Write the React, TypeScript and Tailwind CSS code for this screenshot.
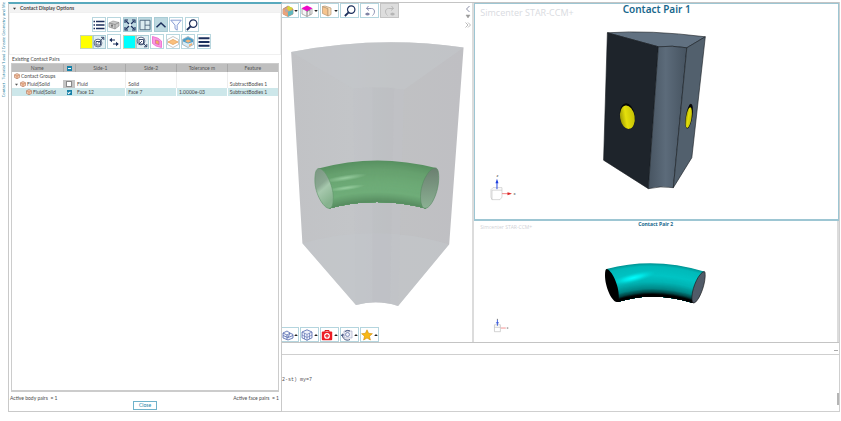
import type { ReactNode } from "react";

type ToolProps = {
  label: string;
  active?: boolean;
  children: ReactNode;
};

type Row = {
  side1: string;
  side2: string;
  tolerance: string;
  feature: string;
};

const childRow: Row = {
  side1: "Face 12",
  side2: "Face 7",
  tolerance: "1.0000e-03",
  feature: "SubtractBodies 1",
};

const Tool = ({ label, active, children }: ToolProps) => (
  <button
    aria-label={label}
    className={`flex h-[15px] w-[14px] shrink-0 items-center justify-center border ${
      active ? "border-[#a9ccd5] bg-[#bdd9e1]" : "border-[#b9d7df] bg-white"
    }`}
  >
    <svg viewBox="0 0 12 12" className="size-3 shrink-0">
      {children}
    </svg>
  </button>
);

const ColorTool = ({ label, swatch, children }: ToolProps & { swatch: string }) => (
  <div className="flex h-[14px] w-[26px]">
    <button aria-label={`${label} color`} className={`w-[13px] border border-[#c5d5b8] ${swatch}`} />
    <button aria-label={label} className="flex w-[13px] items-center justify-center border border-[#a9ccd5] bg-[#e3eff3]">
      <svg viewBox="0 0 12 12" className="size-3 shrink-0">
        {children}
      </svg>
    </button>
  </div>
);

const TreeCube = () => (
  <svg viewBox="0 0 12 12" className="size-[6px] shrink-0">
    <path d="M6 1 11 3.5V9L6 11.5 1 9V3.5Z" fill="#f3c9ae" stroke="#a4664a" />
    <path d="M1 3.5 6 6 11 3.5 M6 6v5.5" fill="none" stroke="#c06c3c" />
  </svg>
);

const Magnifier = () => (
  <g fill="none" stroke="#1c2f5c">
    <circle cx="7.2" cy="4.6" r="3.7" strokeWidth="1.2" />
    <path d="M4.600 7.300 0.900 11" strokeWidth="1.8" />
  </g>
);

type ViewToolProps = {
  label: string;
  arrow?: "up" | "down";
  disabled?: boolean;
  first?: boolean;
  children: ReactNode;
};

const ViewTool = ({ label, arrow, disabled, first, children }: ViewToolProps) => (
  <button
    aria-label={label}
    disabled={disabled}
    className={`flex h-[15px] shrink-0 items-center justify-center border ${first ? "w-[17px] border-l-0" : "w-[19px] gap-px"} ${
      disabled ? "border-[#c4c4c4] bg-[#dddddd]" : "border-[#b4d5de] bg-white"
    }`}
  >
    <svg viewBox="0 0 12 12" className="size-3 shrink-0">
      {children}
    </svg>
    {arrow && (
      <svg viewBox="0 0 4 4" className="size-1 shrink-0">
        <path d={arrow === "up" ? "M0.2 3 2 1 3.8 3Z" : "M0.2 1 2 3 3.8 1Z"} fill="#222" />
      </svg>
    )}
  </button>
);

const Toolbar = () => (
  <div className="flex h-[43px] flex-col items-center border border-[#f0f0f0] pt-1">
    <div className="flex w-[107px] justify-between">
      <Tool label="List">
        <path d="M0.5 2.500h1.500M0.5 6h1.500M0.5 9.500h1.500M3 2.500h8.500M3 6h8.500M3 9.500h8.500" stroke="#1c2f5c" strokeWidth="1.7" />
      </Tool>
      <Tool label="Parts">
        <path d="M1 4 5 2 11 3.5 11 7 7 10 1 8Z" fill="#c9c9c9" stroke="#8b8b8b" strokeWidth="0.6" />
        <path d="M1 4 7 5.5 11 3.5M7 5.5V10M4 4.7V9" fill="none" stroke="#777" strokeWidth="0.6" />
        <circle cx="4" cy="6.7" r="0.9" fill="#666" />
      </Tool>
      <Tool label="Fit view" active>
        <path d="M1 4V1h3M8 1h3v3M11 8v3H8M4 11H1V8" fill="none" stroke="#1c2f5c" strokeWidth="1.1" />
        <path d="M2 2l3 3M10 2 7 5M2 10l3-3M10 10 7 7" stroke="#1c2f5c" strokeWidth="1.2" />
        <path d="M4.5 6h3M6 4.5v3" stroke="#fff" strokeWidth="0.8" />
      </Tool>
      <Tool label="Split layout" active>
        <path d="M1 1.300h10v9.400H1zM6 1.300v9.400M6 6.200h5" fill="#dcebf0" stroke="#425a73" strokeWidth="0.8" />
      </Tool>
      <Tool label="Collapse" active>
        <path d="M1.5 8.200 6 4 10.500 8.200" fill="none" stroke="#1c2f5c" strokeWidth="1.5" />
      </Tool>
      <Tool label="Filter">
        <path d="M0.800 1.200h10.400L7.200 6.200v5L5 9.600V6.200Z" fill="#f6f9ff" stroke="#7e93cf" strokeWidth="0.9" />
      </Tool>
      <Tool label="Search">
        <Magnifier />
      </Tool>
    </div>
    <div className="mt-[2px] flex w-[131px] items-center justify-between">
      <ColorTool label="First side" swatch="bg-[#ffff00]">
        <circle cx="5" cy="7" r="3.9" fill="#fff" stroke="#4a5a7a" strokeWidth="0.9" />
        <path d="M3 5.500h4.500V9H3zM5 7.500 10.500 1.500M8 1.300h2.800V4" fill="none" stroke="#26395f" strokeWidth="0.9" />
      </ColorTool>
      <Tool label="Swap sides">
        <path d="M2 4h5M5 8h5" stroke="#1c2f5c" strokeWidth="1.2" />
        <path d="M4 1.800v4.400L1.200 4ZM8 5.800v4.400L10.800 8Z" fill="#1c2f5c" />
      </Tool>
      <ColorTool label="Second side" swatch="bg-[#00ffff]">
        <circle cx="5" cy="5" r="3.9" fill="#fff" stroke="#4a5a7a" strokeWidth="0.9" />
        <path d="M3 7V3.500h4.500V8H3L6 5M7 7l3.700 3.700M10.800 8v2.800H8" fill="none" stroke="#26395f" strokeWidth="0.9" />
      </ColorTool>
      <Tool label="Highlight faces">
        <path d="M1.500 0.500 7 2.200 10.500 5V11.500L5 10 1.500 7.500Z" fill="#f79adf" stroke="#ee62cf" strokeWidth="0.8" />
        <path d="M4.500 4 8 5v3.600L4.500 7.500Z" fill="#f2ab63" stroke="#d44fb4" strokeWidth="0.6" />
      </Tool>
      <Tool label="Show bodies">
        <path d="M6 0.500 11.500 3.500V8.500L6 11.500 0.500 8.500V3.500Z" fill="#fff" stroke="#b0b0b0" strokeWidth="0.7" />
        <path d="M1 6 6 3.400 11 6 6 8.600Z" fill="#fbc07d" stroke="#e39a4c" strokeWidth="0.7" />
      </Tool>
      <Tool label="Show imprint">
        <path d="M6 0.500 11.500 3.500V8.500L6 11.500 0.500 8.500V3.500Z" fill="#d9ecf5" stroke="#8f9da6" strokeWidth="0.7" />
        <path d="M1 3.500 6 1 11 3.500 11 6 6 7.500 1 5.500Z" fill="#4d9fca" />
        <path d="M3 5 6 3.400 9.500 5 6 6.800ZM7 8.500 10 7v2L7 10.400Z" fill="#f4b477" />
      </Tool>
      <Tool label="Menu">
        <path d="M0.500 2.300h11M0.500 6h11M0.500 9.700h11" stroke="#1c2f5c" strokeWidth="1.9" />
      </Tool>
    </div>
  </div>
);

const PairsTable = () => (
  <table className="w-full table-fixed border-collapse text-[5px] leading-[6px] text-[#4a4a4a]">
    <colgroup>
      <col className="w-[51px]" />
      <col className="w-3" />
      <col />
      <col />
      <col />
      <col />
    </colgroup>
    <thead>
      <tr className="h-2 bg-[#bfbfbf] text-[#555]">
        <th className="border-r border-[#a9a9a9] p-0 font-normal">Name</th>
        <th className="border-r border-[#a9a9a9] p-0">
          <input
            type="checkbox"
            aria-label="Toggle all"
            className="mx-auto flex size-[5px] appearance-none items-center justify-center bg-[#1781a8] after:block after:h-px after:w-[3px] after:bg-white"
          />
        </th>
        <th className="border-r border-[#a9a9a9] p-0 font-normal">Side-1</th>
        <th className="border-r border-[#a9a9a9] p-0 font-normal">Side-2</th>
        <th className="border-r border-[#a9a9a9] p-0 font-normal">Tolerance m</th>
        <th className="p-0 font-normal">Feature</th>
      </tr>
    </thead>
    <tbody>
      <tr className="h-2">
        <td className="p-0">
          <div className="flex items-center gap-px whitespace-nowrap pl-[2px]">
            <TreeCube />
            Contact Groups
          </div>
        </td>
        <td className="p-0" />
        <td className="border-r border-[#eeeeee] p-0" />
        <td className="border-r border-[#eeeeee] p-0" />
        <td className="border-r border-[#eeeeee] p-0" />
        <td className="p-0" />
      </tr>
      <tr className="h-2">
        <td className="p-0">
          <div className="flex items-center gap-px whitespace-nowrap pl-[3px]">
            <svg viewBox="0 0 4 4" className="mr-px size-[3px]">
              <path d="M0 1h4L2 3.500Z" fill="#555" />
            </svg>
            <TreeCube />
            Fluid|Solid
          </div>
        </td>
        <td className="bg-[#c4c4c4] p-0">
          <input
            type="checkbox"
            aria-label="Fluid|Solid group"
            className="mx-auto block size-[6px] appearance-none border border-[#888] bg-white"
          />
        </td>
        <td className="border-r border-[#eeeeee] p-0 pl-[2px]">Fluid</td>
        <td className="border-r border-[#eeeeee] p-0 pl-[2px]">Solid</td>
        <td className="border-r border-[#eeeeee] p-0" />
        <td className="whitespace-nowrap p-0 pl-[2px]">{childRow.feature}</td>
      </tr>
      <tr className="h-2 bg-[#cde7ea]">
        <td className="p-0">
          <div className="flex items-center gap-px whitespace-nowrap pl-[14px]">
            <TreeCube />
            Fluid|Solid
          </div>
        </td>
        <td className="p-0">
          <input
            type="checkbox"
            defaultChecked
            aria-label="Fluid|Solid pair"
            className="mx-auto flex size-[5px] appearance-none items-center justify-center bg-[#1781a8] checked:after:block checked:after:h-[3px] checked:after:w-[2px] checked:after:rotate-45 checked:after:border-b checked:after:border-r checked:after:border-white"
          />
        </td>
        <td className="border-r border-white p-0 pl-[2px]">{childRow.side1}</td>
        <td className="border-r border-white p-0 pl-[2px]">{childRow.side2}</td>
        <td className="border-r border-white p-0 pl-[2px]">{childRow.tolerance}</td>
        <td className="whitespace-nowrap p-0 pl-[2px]">{childRow.feature}</td>
      </tr>
    </tbody>
  </table>
);

const ContactPanel = () => (
  <section className="flex w-[274px] shrink-0 flex-col border border-t-2 border-[#c9c9c9] border-t-[#58a9bd] font-[Lato,sans-serif] text-[#4a4a4a]">
    <h2 className="flex h-2 items-center gap-1 bg-[#f3f3f3] pl-1 text-[5px] font-bold leading-[8px]">
      <svg viewBox="0 0 4 4" className="size-[3px]">
        <path d="M0 1h4L2 3.500Z" fill="#333" />
      </svg>
      Contact Display Options
    </h2>
    <Toolbar />
    <h3 className="pl-[3px] text-[5px] leading-[8px]">Existing Contact Pairs</h3>
    <div className="mx-[2px] flex-1 border border-b-2 border-[#cccccc]">
      <PairsTable />
    </div>
    <footer className="h-[19px] px-px text-[5px] leading-[6px]">
      <div className="flex justify-between pr-px pt-[3px]">
        <span>Active body pairs &nbsp;= 1</span>
        <span>Active face pairs &nbsp;= 1</span>
      </div>
      <button className="mx-auto block h-[9px] w-6 border border-[#6fb2ca] bg-white leading-[7px] text-[#1781a8]">
        Close
      </button>
    </footer>
  </section>
);

// start x, start y, control x, control y, end x, end y
type Curve = [number, number, number, number, number, number];
// position between top and bottom, then r, g, b
type Shade = [number, number, number, number];

const shadeAt = (t: number, shades: Shade[]) => {
  const next = Math.max(1, shades.findIndex((s) => s[0] >= t));
  const a = shades[next - 1];
  const b = shades[next];
  const k = (t - a[0]) / (b[0] - a[0]);
  const mix = (i: 1 | 2 | 3) => Math.round(a[i] + (b[i] - a[i]) * k);
  return `rgb(${mix(1)}, ${mix(2)}, ${mix(3)})`;
};

// Bent pipe surface, shaded by painting bands from the top edge down
const Pipe = ({ top, bottom, shades }: { top: Curve; bottom: Curve; shades: Shade[] }) => (
  <g>
    {Array.from({ length: 40 }, (_, i) => {
      const t = i / 40;
      const [x0, y0, cx, cy, x1, y1] = top.map((v, n) => v + (bottom[n] - v) * t);
      return (
        <path
          key={i}
          d={`M${x0} ${y0}Q${cx} ${cy} ${x1} ${y1}L${bottom[4]} ${bottom[5]}Q${bottom[2]} ${bottom[3]} ${bottom[0]} ${bottom[1]}Z`}
          fill={shadeAt(t, shades)}
        />
      );
    })}
  </g>
);

const TransparentBody = () => (
  <svg viewBox="282 18 190 310" className="min-h-0 w-full flex-1" role="img" aria-label="Transparent body with pipe">
    <defs>
      <linearGradient id="shell" x1="0" x2="1">
        <stop offset="0" stopColor="#c1c2c5" />
        <stop offset="0.35" stopColor="#c3c5c8" />
        <stop offset="0.6" stopColor="#c0c1c3" />
        <stop offset="1" stopColor="#bfbfc3" />
      </linearGradient>
      <linearGradient id="capLeft" x1="0" x2="0.4" y1="0" y2="1">
        <stop offset="0" stopColor="#7b9582" />
        <stop offset="0.45" stopColor="#8aa892" />
        <stop offset="0.6" stopColor="#a6c8ad" />
        <stop offset="1" stopColor="#86b28e" />
      </linearGradient>
      <linearGradient id="capRight" x1="0" x2="0" y1="0" y2="1">
        <stop offset="0" stopColor="#6b7f70" />
        <stop offset="1" stopColor="#8bb193" />
      </linearGradient>
      <radialGradient id="pipeShine">
        <stop offset="0" stopColor="#a9dcb0" stopOpacity="0.7" />
        <stop offset="1" stopColor="#a9dcb0" stopOpacity="0" />
      </radialGradient>
    </defs>
    <path d="M290.700 52Q378 35 463.700 47.500L449.300 245 398 307Q377 300 355.700 306L302 244Z" fill="url(#shell)" />
    <path d="M290.700 52Q378 35 463.700 47.500L404 90Q378 86 353 89Z" fill="#c3c7ca" opacity="0.6" />
    <path d="M302 244Q375 223 449.300 245L398 307Q377 300 355.700 306Z" fill="#c3c7cc" opacity="0.5" />
    <path d="M353 89 355.700 306Q377 300 398 307L404 90Q378 86 353 89Z" fill="#bfc3c8" opacity="0.35" />
    <path d="M372 88 372 303 390 304 394 88Z" fill="#b9babc" opacity="0.2" />
    <Pipe
      top={[318, 169, 376, 153, 436, 168.5]}
      bottom={[329, 209, 376, 196, 426, 209]}
      shades={[
        [0, 88, 145, 97],
        [0.2, 102, 160, 110],
        [0.5, 109, 170, 118],
        [0.75, 111, 173, 121],
        [1, 86, 138, 95],
      ]}
    />
    <ellipse cx="345" cy="178.500" rx="22" ry="3" transform="rotate(-9 345 178.500)" fill="url(#pipeShine)" />
    <ellipse cx="346" cy="188.500" rx="19" ry="2.500" transform="rotate(-8 346 188.500)" fill="url(#pipeShine)" />
    <path d="M318.500 169C325 169 333 186 333 198C333 204 332 209 329 209C323 209 314.500 194 314.500 181C314.500 174 315.500 169 318.500 169Z" fill="url(#capLeft)" stroke="#5f9669" strokeWidth="0.6" />
    <path d="M435.500 168.500C429 168.500 420.500 183 420.500 197C420.500 204 422 209 425 209C431 209 438.800 193 438.800 178C438.800 173 438 168.500 435.500 168.500Z" fill="url(#capRight)" stroke="#578861" strokeWidth="0.6" />
  </svg>
);

const SolidBlock = () => (
  <svg viewBox="475 17 363 202" className="min-h-0 w-full flex-1" role="img" aria-label="Solid block with yellow contact faces">
    <defs>
      <linearGradient id="groove" x1="0" x2="1">
        <stop offset="0" stopColor="#475461" />
        <stop offset="0.45" stopColor="#5c6b7a" />
        <stop offset="1" stopColor="#465360" />
      </linearGradient>
      <linearGradient id="yellowFace" x1="0" x2="1">
        <stop offset="0" stopColor="#9f9c05" />
        <stop offset="0.4" stopColor="#e5e00a" />
        <stop offset="1" stopColor="#c5c106" />
      </linearGradient>
    </defs>
    <g stroke="#161b20" strokeWidth="0.6" strokeLinejoin="round">
      <path d="M607.500 32.500Q650 29.500 705.500 36.500L687 47.500Q672 45 658.500 46.500Z" fill="#617181" />
      <path d="M607.500 32.500 658.500 46.500 648.500 188.500 603.700 160Z" fill="#1e242b" />
      <path d="M658.500 46.500Q672 45 687 47.500L673.500 187.500Q661 185.500 648.500 188.500Z" fill="url(#groove)" />
      <path d="M687 47.500 705.500 36.500 692 157.500 673.500 187.500Z" fill="#52606d" />
    </g>
    <ellipse cx="627.500" cy="116" rx="7.500" ry="13" transform="rotate(-9 627.500 116)" fill="#050607" />
    <ellipse cx="627.500" cy="117" rx="7.300" ry="11.800" transform="rotate(-9 627.500 117)" fill="url(#yellowFace)" />
    <ellipse cx="689.300" cy="116" rx="3.300" ry="12.500" transform="rotate(9 689.300 116)" fill="#050607" />
    <ellipse cx="688.900" cy="117.500" rx="2.800" ry="10.500" transform="rotate(9 688.900 117.500)" fill="url(#yellowFace)" />
    <path d="M491 189.500 493 187.500H502V197L500 199.500H492L491 197ZM492 190H502M492 190V199.500" fill="#fff" stroke="#bdbdbd" strokeWidth="0.6" />
    <path d="M497 189v-7" stroke="#2a49e0" strokeWidth="1" />
    <path d="M495.500 183 497 178.500 498.500 183Z" fill="#1c3ee0" />
    <path d="M502 193.500h7" stroke="#f06a6a" strokeWidth="0.8" />
    <path d="M507.500 192 512 193.500 507.500 195Z" fill="#dc2626" />
    <text x="496.500" y="177" fontSize="4" fill="#333">z</text>
    <text x="513.500" y="195" fontSize="4" fill="#333">x</text>
  </svg>
);

const CyanPipe = () => (
  <svg viewBox="475 231 363 111" className="min-h-0 w-full flex-1" role="img" aria-label="Cyan pipe">
    <defs>
      <radialGradient id="cyanShine">
        <stop offset="0" stopColor="#00ffff" />
        <stop offset="0.4" stopColor="#00f4f4" stopOpacity="0.7" />
        <stop offset="1" stopColor="#00d0d0" stopOpacity="0" />
      </radialGradient>
    </defs>
    <Pipe
      top={[607, 268.5, 655, 255.5, 706, 271]}
      bottom={[618, 302, 655, 290, 695, 303]}
      shades={[
        [0, 0, 150, 150],
        [0.08, 0, 185, 185],
        [0.35, 0, 196, 196],
        [0.55, 0, 180, 180],
        [0.75, 0, 135, 135],
        [0.87, 0, 60, 60],
        [0.92, 0, 0, 0],
        [1, 0, 0, 0],
      ]}
    />
    <ellipse cx="634" cy="277.500" rx="24" ry="5" transform="rotate(-14 634 277.500)" fill="url(#cyanShine)" />
    <path d="M607 268.500C612 269 620 285 619.500 297C619.500 300 619 302 617.500 302C612 301 605.500 286 605.500 275C605.500 271 606 268.500 607 268.500Z" fill="#000" />
    <path d="M706 271C701 272 694 286 693.500 297C693.500 301 694 303 695.500 303C700 302 706.500 287 707 276C707 273 707 271 706 271Z" fill="#515b68" stroke="#111" strokeWidth="0.6" />
    <path d="M493.500 325H499.500V332H493.500ZM493.500 327.500h6" fill="#fff" stroke="#b5b5b5" strokeWidth="0.6" />
    <path d="M496.500 326v-6M495 323h3" stroke="#3354d8" strokeWidth="0.9" />
    <path d="M500 328.300h5" stroke="#e66" strokeWidth="0.7" />
    <path d="M506 328.300h1.500M496.500 319v1" stroke="#444" strokeWidth="0.8" />
  </svg>
);

const MainView = () => (
  <section className="relative flex min-w-0 flex-[191] flex-col border-r-2 border-[#dcdcdc]">
    <div className="flex gap-px">
      <ViewTool label="Scene color" arrow="down" first>
        <path d="M1 4 6 1 11 4V9L6 11.500 1 9Z" fill="#e9a06f" stroke="#9c7e70" strokeWidth="0.7" />
        <path d="M6 1 11 3 8 6 5 4Z" fill="#d6d63a" />
        <path d="M6 6.500 11 5V9L6 11.500Z" fill="#5fb7bf" />
        <path d="M1 4 5 6V11L1 9Z" fill="#eba37b" />
        <path d="M3 3.500 6 5v3L3 6.500Z" fill="#b9a7a0" />
      </ViewTool>
      <ViewTool label="Top face" arrow="down">
        <path d="M1 3.500 6 6V11.500L1 9ZM11 3.500 6 6V11.500L11 9Z" fill="#f5f5f5" stroke="#8f8f8f" strokeWidth="0.7" />
        <path d="M0.500 3.300 6 0.500 11.500 3.300 6 6.300Z" fill="#ed09c9" />
        <path d="M6 6.500 9 5v5" fill="none" stroke="#777" strokeWidth="0.7" />
      </ViewTool>
      <ViewTool label="Section" arrow="down">
        <path d="M1.500 1.500 7 3.500V11L1.500 8.500Z" fill="#f5c48e" stroke="#b59774" strokeWidth="0.7" />
        <path d="M1.500 1.500 4 1 10 3V9.500L7 11V3.500Z" fill="#f9ddb7" stroke="#b59774" strokeWidth="0.7" />
      </ViewTool>
      <ViewTool label="Zoom">
        <Magnifier />
      </ViewTool>
      <ViewTool label="Undo">
        <path d="M4.500 1 2.500 3.500 5 5.500M2.500 3.500H7.500C11 3.500 11.500 8 8.500 10.500" fill="none" stroke="#8d91b2" strokeWidth="1" />
        <path d="M1 9Q3.500 6 6 9Q3.500 12 1 9Z" fill="#8084a5" />
      </ViewTool>
      <ViewTool label="Redo" disabled>
        <path d="M7.500 1 9.500 3.500 7 5.500M9.500 3.500H4.500C1 3.500 0.500 8 3.500 10.500" fill="none" stroke="#b9b9b9" strokeWidth="1" />
        <path d="M6 9Q8.500 6 11 9Q8.500 12 6 9Z" fill="#b5b5b5" />
      </ViewTool>
    </div>
    {/* scene navigation floats over the canvas corner */}
    <svg viewBox="0 0 6 26" className="absolute right-px top-0 h-[26px] w-[6px]" fill="none" stroke="#8b8fa6">
      <path d="M4.500 3 1.500 6 4.500 9" />
      <path d="M1 12h4L3 15Z" fill="#999" stroke="#999" strokeWidth="0.5" />
      <path d="M0.500 19.500 3 22 0.500 24.500M3 19.500 5.500 22 3 24.500" stroke="#aaa" strokeWidth="0.8" />
    </svg>
    <TransparentBody />
    <div className="flex gap-px">
      <ViewTool label="Mesh parts" arrow="up" first>
        <path d="M1 4 5 2 8 4 11 5.500V9L6 11 1 9ZM1 4 5 6 8 4M5 6V10.500M1 6.500 6 8.500 11 6.500M6 8.500 8 4" fill="#eef1fb" stroke="#5368ad" strokeWidth="0.8" />
      </ViewTool>
      <ViewTool label="Mesh" arrow="up">
        <path d="M6 0.800 11 3V8.800L6 11.300 1 8.800V3Z" fill="#eef1fb" stroke="#5368ad" strokeWidth="0.8" />
        <path d="M1 3 6 5.400 11 3M6 5.400V11.300M1 6 6 8.400 11 6M3.500 4.200V10M8.500 4.200V10" fill="none" stroke="#5368ad" strokeWidth="0.6" />
      </ViewTool>
      <ViewTool label="Repair" arrow="up">
        <path d="M4 3V1.500H8V3" fill="none" stroke="#d7191c" />
        <rect x="0.800" y="2.500" width="10.400" height="8.700" rx="1" fill="#ed1c24" />
        <circle cx="6" cy="6.900" r="2.900" fill="#fff" />
        <path d="M6 5v3.800M4.100 6.900h3.800" stroke="#ed1c24" strokeWidth="1.200" />
      </ViewTool>
      <ViewTool label="Rotate" arrow="up">
        <path d="M3 2H11V9H3Z" fill="#eef0f7" stroke="#9aa0bd" strokeWidth="0.6" />
        <path d="M9 10.500C5 12.500 1 9.500 1.500 5.500M0.300 7 1.500 5 3.200 6.500M4 2.500Q6 0.500 9 2" fill="none" stroke="#44547f" strokeWidth="1" />
        <circle cx="6.500" cy="5.500" r="2" fill="none" stroke="#6d7cad" strokeWidth="0.800" />
      </ViewTool>
      <ViewTool label="Favorites" arrow="up">
        <path d="M6 0.800 7.600 4.300 11.400 4.700 8.500 7.200 9.400 11 6 9 2.600 11 3.500 7.200 0.600 4.700 4.400 4.300Z" fill="#f8b816" stroke="#d18d0a" strokeWidth="0.6" />
      </ViewTool>
    </div>
  </section>
);

const App = () => {
  return (
    <main className="flex h-screen bg-white pb-[9px] pr-px pt-[2px] font-['Noto_Sans','Open_Sans',sans-serif]">
      <aside className="w-2 shrink-0 text-[4px] leading-[7px] text-[#2a7f9f]">
        <span className="block rotate-180 whitespace-nowrap [writing-mode:vertical-rl]">
          Contact - Tutorial 1 and 2 Create Geometry and Me
        </span>
      </aside>
      <ContactPanel />
      <div className="flex min-w-0 flex-1 flex-col border-b border-r border-[#cfcfcf]">
        <div className="flex min-h-0 flex-1 border-b border-t border-[#c4c4c4]">
          <MainView />
          <div className="flex min-w-0 flex-[366] flex-col">
            <section className="flex min-h-0 flex-[218] flex-col border border-b-2 border-[#9dc6d3]">
              <header className="grid h-[13px] grid-cols-[1fr_auto_1fr]">
                <span className="whitespace-nowrap pl-[5px] pt-1 font-['Open_Sans',sans-serif] text-[9px] leading-[10px] text-[#d9dbdf]">
                  Simcenter STAR-CCM+
                </span>
                <h1 className="text-[10px] font-semibold leading-[10px] text-[#18678c]">Contact Pair 1</h1>
              </header>
              <SolidBlock />
            </section>
            <section className="flex min-h-0 flex-[122] flex-col border-r-2 border-[#dcdcdc]">
              <header className="grid h-[11px] grid-cols-[1fr_auto_1fr]">
                <span className="whitespace-nowrap pl-[6px] pt-[3px] font-['Open_Sans',sans-serif] text-[5px] leading-[7px] text-[#d0d2d6]">
                  Simcenter STAR-CCM+
                </span>
                <h1 className="text-[5px] font-bold leading-[7px] text-[#18678c]">Contact Pair 2</h1>
              </header>
              <CyanPipe />
            </section>
          </div>
        </div>
        <div className="flex h-[11px] items-end justify-end pb-[3px] pr-px">
          <button aria-label="Minimize output" className="h-px w-1 bg-[#aaa]" />
        </div>
        <div className="flex h-[57px] items-end justify-between border-t border-[#cfcfcf]">
          <pre className="self-center pb-[6px] font-['Liberation_Mono',monospace] text-[5px] leading-[6px] text-[#555]">2-st) my=7</pre>
          <div className="mb-[6px] h-3 w-[2px] bg-[#b5b5b5]" />
        </div>
      </div>
    </main>
  );
};

export default App;
